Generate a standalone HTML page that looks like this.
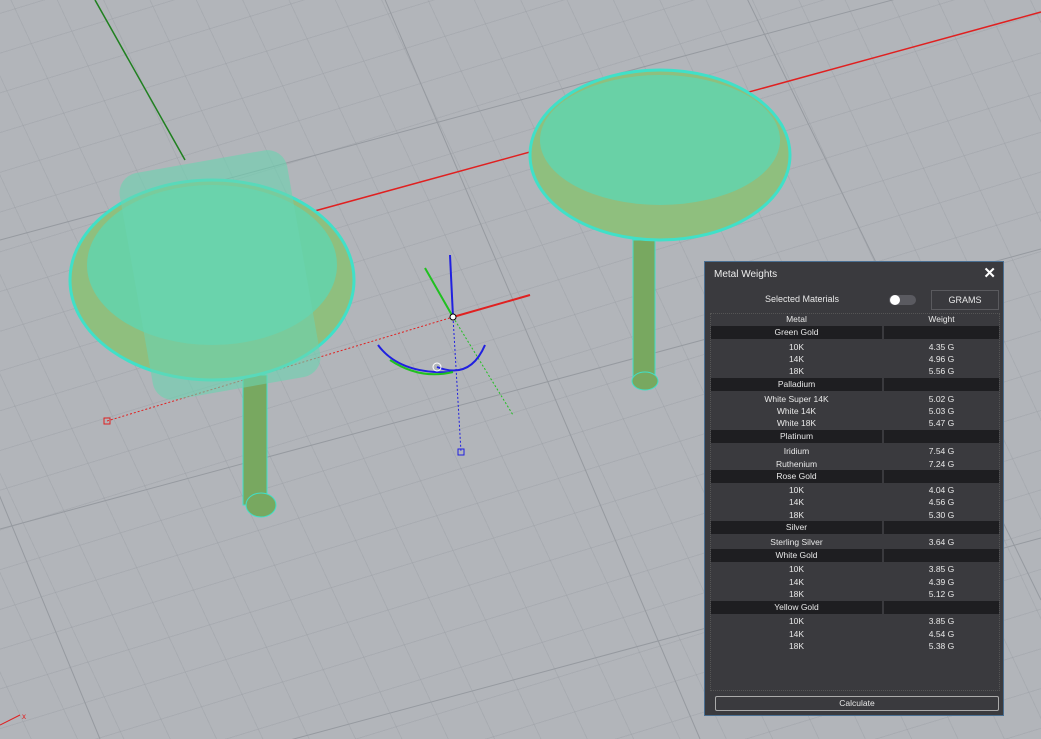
<!DOCTYPE html>
<html style="overflow:hidden"><head><style>
html,body{margin:0;width:1041px;height:739px;overflow:hidden}
body{background:#b2b5ba;font-family:"Liberation Sans",sans-serif;position:relative}
#w{position:absolute;left:0;top:0;width:1041px;height:739px;overflow:hidden}
#g1{position:absolute;left:-400px;top:-400px;width:1900px;height:1600px;transform:rotate(-17deg);background:repeating-linear-gradient(0deg,rgba(150,154,160,.35) 0 1px,transparent 1px 38px)}
#g2{position:absolute;left:-400px;top:-400px;width:1900px;height:1600px;transform:rotate(-25deg);background:repeating-linear-gradient(90deg,rgba(150,154,160,.35) 0 1px,transparent 1px 42px)}
svg{position:absolute;left:0;top:0}
#p{position:absolute;left:704px;top:261px;width:300px;height:455px;background:#3a3a3e;border:1px solid #4a6f92;box-sizing:border-box;color:#e8e8e8;font-size:8.5px}
.t{position:absolute;left:9px;top:7px;font-size:10px;color:#eee}
.x{position:absolute;right:7px;top:2px;font-size:15px;font-weight:bold;color:#fff}
.r{position:absolute;left:6px;width:288px;height:13px;line-height:13px}
.r span{position:absolute;text-align:center}
.a{left:0;width:171px}.b{left:173px;width:115px}
.h{background:#1e1e21}
.h::after{content:"";position:absolute;left:171px;top:0;width:2px;height:13px;background:#3a3a3e}
</style></head><body>
<div id="w"><div id="g1"></div><div id="g2"></div>
<svg width="1041" height="739">
<g stroke="#969aa0" stroke-width="1">
<line x1="0" y1="240" x2="1041" y2="-40"/><line x1="0" y1="529" x2="1041" y2="249"/><line x1="0" y1="818" x2="1041" y2="538"/>
<line x1="300" y1="-200" x2="700" y2="739"/><line x1="-40" y1="400" x2="100" y2="739"/><line x1="650" y1="-200" x2="1041" y2="600"/>
</g>
<line x1="300" y1="215" x2="1041" y2="12" stroke="#e02020" stroke-width="1.5"/>
<line x1="95" y1="0" x2="185" y2="160" stroke="#208020" stroke-width="1.5"/>
<line x1="107" y1="421" x2="453" y2="317" stroke="#e02020" stroke-dasharray="2,2"/>
<line x1="453" y1="317" x2="461" y2="452" stroke="#2020e0" stroke-dasharray="2,2"/>
<line x1="453" y1="317" x2="513" y2="415" stroke="#20c020" stroke-dasharray="2,2"/>
<line x1="453" y1="317" x2="450" y2="255" stroke="#2020e0" stroke-width="2"/>
<line x1="453" y1="317" x2="530" y2="295" stroke="#e02020" stroke-width="2"/>
<line x1="453" y1="317" x2="425" y2="268" stroke="#20c020" stroke-width="2"/>
<path d="M378 345 Q400 375 453 372 M437 367 Q470 380 485 345" stroke="#2020e0" fill="none" stroke-width="2"/>
<path d="M390 360 Q420 380 453 372" stroke="#20c020" fill="none" stroke-width="2"/>
<rect x="104" y="418" width="6" height="6" fill="none" stroke="#e02020"/>
<rect x="458" y="449" width="6" height="6" fill="none" stroke="#2020e0"/>
<circle cx="453" cy="317" r="3" fill="#fff" stroke="#000"/>
<circle cx="437" cy="367" r="4" fill="none" stroke="#fff"/>
<rect x="243" y="375" width="24" height="130" fill="#78a860" stroke="#40e0c8"/>
<ellipse cx="261" cy="505" rx="15" ry="12" fill="#78a860" stroke="#40e0c8"/>
<rect x="633" y="240" width="22" height="140" fill="#78a860" stroke="#40e0c8"/>
<ellipse cx="645" cy="381" rx="13" ry="9" fill="#78a860" stroke="#40e0c8"/>
<ellipse cx="212" cy="280" rx="142" ry="100" fill="#8fbf7e" stroke="#40e0c8" stroke-width="3"/>
<ellipse cx="212" cy="265" rx="125" ry="80" fill="#58d9b8" opacity=".7"/>
<rect x="135" y="160" width="170" height="230" rx="20" fill="#6ad4b0" opacity=".6" transform="rotate(-10 220 275)"/>
<ellipse cx="660" cy="155" rx="130" ry="85" fill="#8fbf7e" stroke="#40e0c8" stroke-width="3"/>
<ellipse cx="660" cy="140" rx="120" ry="65" fill="#58d9b8" opacity=".7"/>
<line x1="0" y1="725" x2="20" y2="715" stroke="#e02020"/><text x="22" y="719" font-size="8" fill="#e02020">x</text>
</svg></div>
<div id="p">
<div class="t">Metal Weights</div><div class="x">✕</div>
<div style="position:absolute;left:60px;top:32px;font-size:9px">Selected Materials</div>
<div style="position:absolute;left:184px;top:33px;width:27px;height:10px;border-radius:5px;background:#5a5a60"></div>
<div style="position:absolute;left:185px;top:33px;width:10px;height:10px;border-radius:5px;background:#fff"></div>
<div style="position:absolute;left:226px;top:28px;width:68px;height:20px;border:1px solid #5a5a5e;box-sizing:border-box;text-align:center;line-height:18px;font-size:9px">GRAMS</div>
<div style="position:absolute;left:5px;top:51px;width:290px;height:378px;border:1px dotted #555;box-sizing:border-box"></div>
<div class="r" style="top:51px"><span class="a">Metal</span><span class="b">Weight</span></div>
<div class="r h" style="top:64px"><span class="a">Green Gold</span></div>
<div class="r" style="top:79px"><span class="a">10K</span><span class="b">4.35 G</span></div>
<div class="r" style="top:91px"><span class="a">14K</span><span class="b">4.96 G</span></div>
<div class="r" style="top:103px"><span class="a">18K</span><span class="b">5.56 G</span></div>
<div class="r h" style="top:116px"><span class="a">Palladium</span></div>
<div class="r" style="top:131px"><span class="a">White Super 14K</span><span class="b">5.02 G</span></div>
<div class="r" style="top:143px"><span class="a">White 14K</span><span class="b">5.03 G</span></div>
<div class="r" style="top:155px"><span class="a">White 18K</span><span class="b">5.47 G</span></div>
<div class="r h" style="top:168px"><span class="a">Platinum</span></div>
<div class="r" style="top:183px"><span class="a">Iridium</span><span class="b">7.54 G</span></div>
<div class="r" style="top:196px"><span class="a">Ruthenium</span><span class="b">7.24 G</span></div>
<div class="r h" style="top:208px"><span class="a">Rose Gold</span></div>
<div class="r" style="top:222px"><span class="a">10K</span><span class="b">4.04 G</span></div>
<div class="r" style="top:234px"><span class="a">14K</span><span class="b">4.56 G</span></div>
<div class="r" style="top:247px"><span class="a">18K</span><span class="b">5.30 G</span></div>
<div class="r h" style="top:259px"><span class="a">Silver</span></div>
<div class="r" style="top:274px"><span class="a">Sterling Silver</span><span class="b">3.64 G</span></div>
<div class="r h" style="top:287px"><span class="a">White Gold</span></div>
<div class="r" style="top:301px"><span class="a">10K</span><span class="b">3.85 G</span></div>
<div class="r" style="top:314px"><span class="a">14K</span><span class="b">4.39 G</span></div>
<div class="r" style="top:326px"><span class="a">18K</span><span class="b">5.12 G</span></div>
<div class="r h" style="top:339px"><span class="a">Yellow Gold</span></div>
<div class="r" style="top:353px"><span class="a">10K</span><span class="b">3.85 G</span></div>
<div class="r" style="top:366px"><span class="a">14K</span><span class="b">4.54 G</span></div>
<div class="r" style="top:378px"><span class="a">18K</span><span class="b">5.38 G</span></div>
<div style="position:absolute;left:10px;top:434px;width:284px;height:15px;border:1px solid #aaa;border-radius:2px;box-sizing:border-box;text-align:center;line-height:13px">Calculate</div>
</div>
</body></html>
